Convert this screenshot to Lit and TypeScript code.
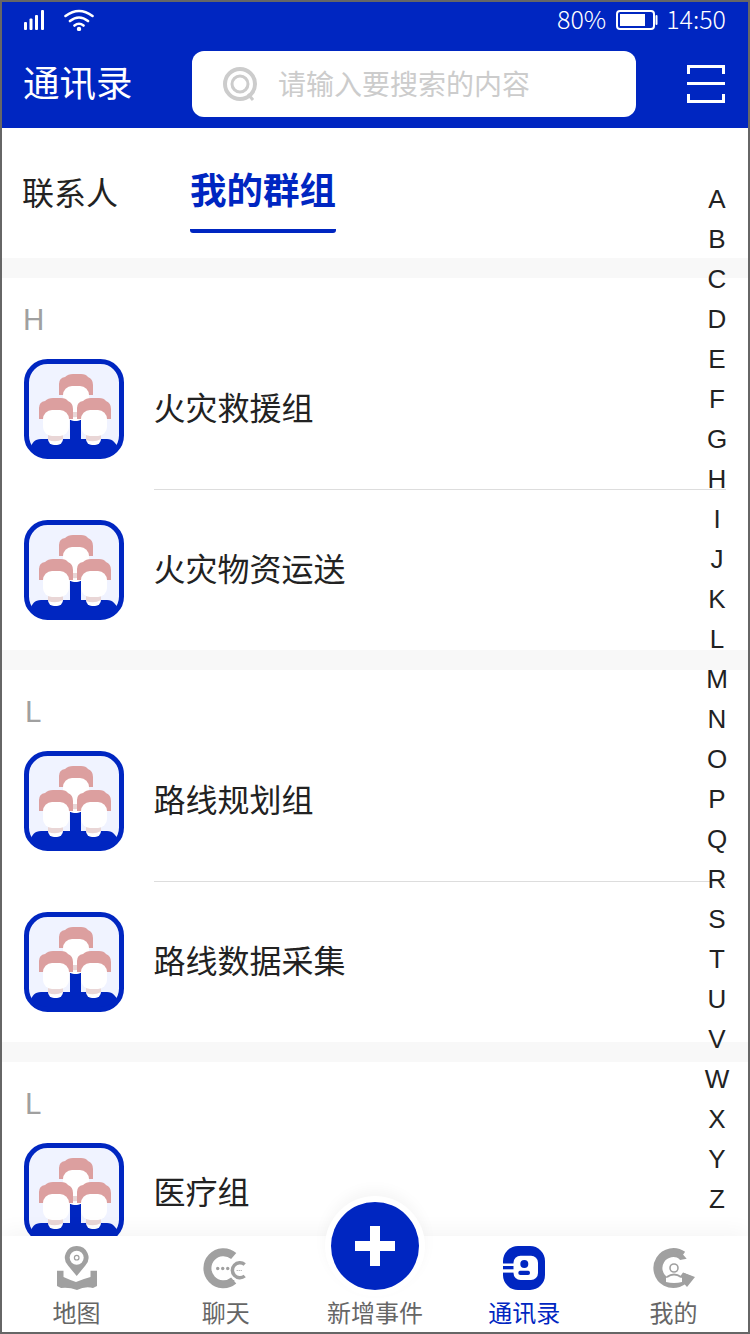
import { LitElement, html, css, svg } from 'lit';
import { customElement } from 'lit/decorators.js';

const groups = [
    { letter: 'H', names: ['火灾救援组', '火灾物资运送'] },
    { letter: 'L', names: ['路线规划组', '路线数据采集'] },
    { letter: 'L', names: ['医疗组'] },
];

const letters = 'ABCDEFGHIJKLMNOPQRSTUVWXYZ'.split('');

const person = (x: number, y: number) => svg`
    <rect x="${x + 9}" y="${y + 30}" width="15" height="21" rx="6" fill="#fff"/>
    <path d="M${x + 9} ${y + 38}h15v7q-7 4-15 1z" fill="#e9d6d6"/>
    <path d="M${x} ${y + 25}V${y + 14}q0-6 6-7 3-3 8-3h8q5 0 7 3 5 2 5 8v10z" fill="#dc9f9f"/>
    <rect x="${x + 4}" y="${y + 16}" width="26" height="26" rx="9" fill="#fff"/>
`;

const avatar = html`<svg class="avatar" viewBox="0 0 100 100">
    <defs>
        <clipPath id="avatar-clip"><rect x="2" y="2" width="96" height="96" rx="21"/></clipPath>
    </defs>
    <rect x="2" y="2" width="96" height="96" rx="21" fill="#f0f3ff"/>
    <g clip-path="url(#avatar-clip)">
        <path d="M7 100V90c0-6 4-10 10-10h29V61h11v19h26c6 0 10 5 11 10v10z" fill="#0026c1"/>
    </g>
    <rect x="2.500" y="2.500" width="95" height="95" rx="21" fill="none" stroke="#0026c1" stroke-width="5"/>
    ${person(35, 11)}
    ${person(15, 35)}
    ${person(53, 35)}
</svg>`;

@customElement('app-root')
export class AppRoot extends LitElement {
    static styles = css`
        :host {
            display: block;
            font-family: 'Noto Sans CJK SC', 'Noto Sans', sans-serif;
        }

        * {
            box-sizing: border-box;
        }

        .frame {
            position: relative;
            display: flex;
            flex-direction: column;
            width: 750px;
            height: 1334px;
            border: 2px solid #666;
            overflow: hidden;
            background: #fff;
        }

        .top {
            flex: none;
            background: #0026c1;
            color: #fff;
        }

        .status {
            display: flex;
            align-items: center;
            height: 36px;
            padding: 0 22px;
            font-size: 25px;
            font-weight: 300;
        }

        .status span {
            margin-top: -4px;
        }

        .status .wifi {
            margin-left: 20px;
        }

        .status .right {
            display: flex;
            align-items: center;
            margin-left: auto;
        }

        .status .battery {
            margin: 0 8px 0 10px;
        }

        .head {
            display: flex;
            align-items: center;
            height: 90px;
            padding: 13px 23px 11px 21px;
        }

        .head h1 {
            width: 169px;
            margin: -4px 0 0;
            font-size: 36.500px;
            font-weight: 400;
            line-height: 66px;
        }

        .search {
            display: flex;
            align-items: center;
            gap: 20px;
            width: 444px;
            height: 66px;
            padding-left: 31px;
            border-radius: 12px;
            background: #fff;
            color: #ccc;
            font-size: 28px;
        }

        .search span {
            margin-top: -2px;
        }

        .scan {
            margin-left: auto;
        }

        .tabs {
            flex: none;
            display: flex;
            gap: 72px;
            height: 130px;
            padding: 0 20px;
        }

        .tab {
            display: flex;
            align-items: center;
            height: 105px;
            padding-top: 20px;
            color: #222;
            font-size: 32px;
        }

        .tab.active {
            color: #0026c1;
            font-size: 36.500px;
            font-weight: 700;
            border-bottom: 4px solid #0026c1;
            border-radius: 0 0 3px 3px;
        }

        .list {
            flex: 1;
            min-height: 0;
            overflow: hidden;
        }

        .section {
            border-top: 20px solid #f8f8f8;
        }

        .letter {
            width: 20px;
            height: 51px;
            margin-left: 21px;
            padding-top: 19px;
            color: #a0a0a0;
            font-family: Roboto, sans-serif;
            font-size: 30px;
            line-height: 46px;
            text-align: center;
        }

        .row {
            display: flex;
            align-items: center;
            gap: 29.500px;
            height: 160px;
            padding-left: 22px;
            color: #222;
            font-size: 32px;
        }

        .row span {
            margin-top: -6px;
        }

        .rule {
            height: 1px;
            margin: 0 22px 0 152px;
            background: #ddd;
        }

        .avatar {
            display: block;
            flex: none;
            width: 100px;
            height: 100px;
        }

        .index {
            position: absolute;
            top: 177px;
            right: 11px;
            width: 40px;
            color: #222;
            font-family: 'Liberation Sans', sans-serif;
            font-size: 26px;
            line-height: 40px;
            text-align: center;
        }

        .tabbar {
            position: relative;
            flex: none;
            display: grid;
            grid-template-columns: repeat(5, 1fr);
            height: 96px;
            background: #fff;
            box-shadow: 0 -6px 20px rgba(0, 0, 0, 0.04);
        }

        .item {
            position: relative;
            display: flex;
            flex-direction: column;
            align-items: center;
            padding-top: 10px;
            color: #666;
            font-size: 24px;
            line-height: 34px;
        }

        .item svg {
            display: block;
            height: 44px;
            margin-bottom: 5px;
        }

        .item.active {
            color: #0026c1;
        }

        .item .gap {
            height: 49px;
        }

        .fab {
            position: absolute;
            top: -40px;
            left: 323px;
            display: flex;
            align-items: center;
            justify-content: center;
            width: 100px;
            height: 100px;
            border-radius: 50%;
            background: #fff;
            box-shadow: 0 -6px 14px rgba(0, 0, 0, 0.04);
        }

        .fab span {
            display: flex;
            align-items: center;
            justify-content: center;
            width: 88px;
            height: 88px;
            border-radius: 50%;
            background: #0026c1;
        }
    `;

    render() {
        return html`
            <div class="frame">
                <div class="top">
                    <div class="status">
                        <svg width="20" height="20" viewBox="0 0 20 20" fill="#fff">
                            <rect y="12" width="3" height="8" rx="1"/>
                            <rect x="5.500" y="8.500" width="3" height="11.500" rx="1"/>
                            <rect x="11" y="5" width="3" height="15" rx="1"/>
                            <rect x="17" y="0" width="3" height="20" rx="1"/>
                        </svg>
                        <svg class="wifi" width="30" height="22" viewBox="0 0 30 22" fill="none" stroke="#fff" stroke-width="2.600" stroke-linecap="round">
                            <path d="M1.500 7Q15-3 28.500 7M6 12q9-7 18 0M10.500 16.500q4.500-3.500 9 0"/>
                            <circle cx="15" cy="20" r="2.200" fill="#fff" stroke="none"/>
                        </svg>
                        <div class="right">
                            <span>80%</span>
                            <svg class="battery" width="42" height="20" viewBox="0 0 42 20">
                                <rect x="1" y="1" width="37" height="18" rx="3" fill="none" stroke="#fff" stroke-width="2"/>
                                <rect x="4" y="4" width="25" height="12" fill="#fff"/>
                                <rect x="39.500" y="5" width="2" height="10" rx="1" fill="#fff"/>
                            </svg>
                            <span>14:50</span>
                        </div>
                    </div>
                    <div class="head">
                        <h1>通讯录</h1>
                        <div class="search">
                            <svg width="35" height="35" viewBox="0 0 35 35" fill="none" stroke="#ccc">
                                <circle cx="17" cy="17" r="15" stroke-width="4"/>
                                <circle cx="17" cy="17" r="8" stroke-width="3"/>
                                <path d="M25 27l5 6" stroke-width="3"/>
                            </svg>
                            <span>请输入要搜索的内容</span>
                        </div>
                        <svg class="scan" width="38" height="38" viewBox="0 0 38 38" fill="none" stroke="#fff" stroke-width="3">
                            <path d="M1.500 9V1.500h35V9M0 18.500h38M1.500 29v7.500h35V29"/>
                        </svg>
                    </div>
                </div>
                <div class="tabs">
                    <div class="tab">联系人</div>
                    <div class="tab active">我的群组</div>
                </div>
                <div class="list">
                    ${groups.map(
                        (group) => html`
                            <div class="section">
                                <div class="letter">${group.letter}</div>
                                ${group.names.map(
                                    (name, i) => html`
                                        ${i > 0 ? html`<div class="rule"></div>` : ''}
                                        <div class="row">${avatar}<span>${name}</span></div>
                                    `,
                                )}
                            </div>
                        `,
                    )}
                </div>
                <div class="index">
                    ${letters.map((letter) => html`<div>${letter}</div>`)}
                </div>
                <div class="tabbar">
                    <div class="item">
                        <svg width="40" viewBox="0 0 40 44" fill="#a0a0a0">
                            <path d="M19.700 0a11.700 11.700 0 0 1 8.500 19.800L19.700 30l-8.500-10.200A11.700 11.700 0 0 1 19.700 0z"/>
                            <circle cx="19.700" cy="11.700" r="7" fill="#fff"/>
                            <circle cx="19.700" cy="11.700" r="2.300" fill="none" stroke="#a0a0a0" stroke-width="1.200"/>
                            <path d="M0 24.700h6.500V31q6.500 3 12.500 5 7-3 14.500-5v-6.300H40V40l-4 2q-8-2-16 2-8-3-16-2l-4-2z"/>
                        </svg>
                        <span>地图</span>
                    </div>
                    <div class="item">
                        <svg width="48" viewBox="1.800 2 48 44">
                            <path d="M33.500 12A16 16 0 1 0 33.500 36.500" fill="none" stroke="#a0a0a0" stroke-width="8"/>
                            <path d="M26 36h8.500l-5.500 7z" fill="#a0a0a0"/>
                            <circle cx="17.500" cy="24.500" r="1.700" fill="#a0a0a0"/>
                            <circle cx="22.500" cy="24.500" r="1.700" fill="#a0a0a0"/>
                            <circle cx="27.500" cy="24.500" r="1.700" fill="#a0a0a0"/>
                            <path d="M44.500 20.500A7.500 7.500 0 1 0 44.500 32" fill="none" stroke="#a0a0a0" stroke-width="3.500"/>
                            <path d="M36.500 26.500h6" stroke="#a0a0a0" stroke-width="1" stroke-dasharray="1 1"/>
                        </svg>
                        <span>聊天</span>
                    </div>
                    <div class="item">
                        <div class="gap"></div>
                        <span>新增事件</span>
                    </div>
                    <div class="item active">
                        <svg width="42" viewBox="0 0 42 44">
                            <rect width="42" height="44" rx="15" fill="#0026c1"/>
                            <rect x="10.500" y="9.700" width="24.500" height="24.300" rx="7" fill="#fff"/>
                            <rect y="17.500" width="12" height="2.500" fill="#fff"/>
                            <rect y="23.300" width="12" height="3.300" fill="#fff"/>
                            <circle cx="21.300" cy="18" r="4" fill="#0026c1"/>
                            <rect x="15.300" y="24.700" width="11.700" height="4.300" rx="2" fill="#0026c1"/>
                        </svg>
                        <span>通讯录</span>
                    </div>
                    <div class="item">
                        <svg width="48" viewBox="0 2 48 44">
                            <path d="M33.500 11.500A15.500 15.500 0 1 0 38.500 30.500" fill="none" stroke="#a0a0a0" stroke-width="9"/>
                            <path d="M34 28.500l12 4.500-8 10-8-9zM30 6l7.700 8.700-6.700 1.300-4-6z" fill="#a0a0a0"/>
                            <path d="M17 38v-4q8-5 16 0v4q-8 2-16 0z" fill="#fff"/>
                            <circle cx="25" cy="24" r="4" fill="none" stroke="#a0a0a0" stroke-width="1.600"/>
                            <path d="M18 33q7-5 14 0" fill="none" stroke="#a0a0a0" stroke-width="2"/>
                        </svg>
                        <span>我的</span>
                    </div>
                    <div class="fab">
                        <span>
                            <svg width="40" height="40" viewBox="0 0 40 40" fill="#fff">
                                <path d="M15 0h10v15h15v10H25v15H15V25H0V15h15z"/>
                            </svg>
                        </span>
                    </div>
                </div>
            </div>
        `;
    }
}
